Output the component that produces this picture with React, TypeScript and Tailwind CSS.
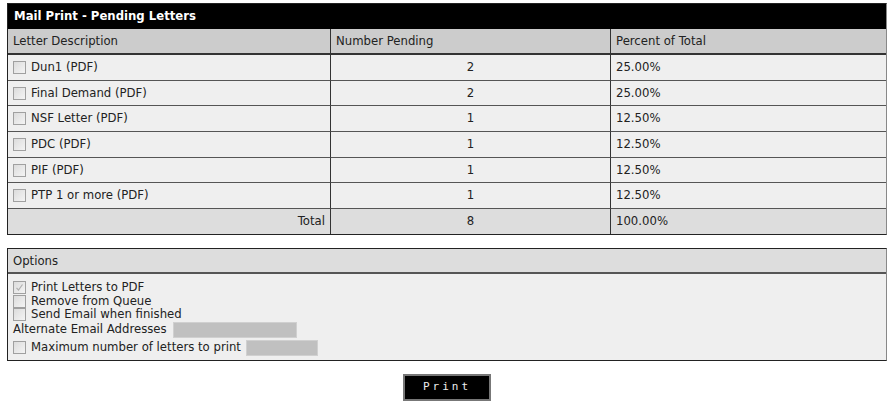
import React from "react";

const rows = [
  { d: "Dun1 (PDF)", n: 2, p: "25.00%", h: "h-[26px]" },
  { d: "Final Demand (PDF)", n: 2, p: "25.00%", h: "h-[25px]" },
  { d: "NSF Letter (PDF)", n: 1, p: "12.50%", h: "h-[26px]" },
  { d: "PDC (PDF)", n: 1, p: "12.50%", h: "h-[26px]" },
  { d: "PIF (PDF)", n: 1, p: "12.50%", h: "h-[25px]" },
  { d: "PTP 1 or more (PDF)", n: 1, p: "12.50%", h: "h-[26px]" },
];

function Box({ checked = false, disabled = false }: { checked?: boolean; disabled?: boolean }) {
  return (
    <span className="inline-flex items-center justify-center w-[13px] h-[13px] border border-[#a0a0a0] bg-gradient-to-br from-[#dcdcdc] to-[#f4f4f4] shrink-0">
      {checked && (
        <svg width="9" height="9" viewBox="0 0 9 9">
          <path d="M1.5 4.8 L3.5 7 L7.5 1.5" stroke={disabled ? "#b0b0b0" : "#333"} strokeWidth="1.2" fill="none" />
        </svg>
      )}
    </span>
  );
}

export default function App() {
  return (
    <div className="w-[894px] h-[402px] bg-white text-[11.7px] text-[#222] pt-[3px] px-[7px]" style={{ fontFamily: '"DejaVu Sans", Verdana, sans-serif' }}>
      <div className="border border-[#222] border-r-[#888]">
        <div className="bg-black text-white font-bold h-[25px] flex items-center px-[6px]">Mail Print - Pending Letters</div>
        <div className="grid grid-cols-[323px_280px_1fr]">
          <div className="bg-[#cccccc] h-[26px] flex items-center px-[5px] pt-[1px] border-b-2 border-[#333] border-r border-r-[#333]">Letter Description</div>
          <div className="bg-[#cccccc] h-[26px] flex items-center px-[5px] pt-[1px] border-b-2 border-[#333] border-r border-r-[#333]">Number Pending</div>
          <div className="bg-[#cccccc] h-[26px] flex items-center px-[5px] pt-[1px] border-b-2 border-[#333]">Percent of Total</div>
          {rows.map((r) => (
            <React.Fragment key={r.d}>
              <div className={`bg-[#efefef] ${r.h} flex items-center gap-[5px] px-[5px] border-b border-[#555] border-r border-r-[#333]`}>
                <Box />
                <span className="pt-[1px]">{r.d}</span>
              </div>
              <div className={`bg-[#efefef] ${r.h} flex items-center justify-center pt-[1px] border-b border-[#555] border-r border-r-[#333]`}>{r.n}</div>
              <div className={`bg-[#efefef] ${r.h} flex items-center px-[5px] pt-[1px] border-b border-[#555]`}>{r.p}</div>
            </React.Fragment>
          ))}
          <div className="bg-[#dddddd] h-[25px] flex items-center justify-end px-[5px] pt-[1px] border-r border-r-[#333]">Total</div>
          <div className="bg-[#dddddd] h-[25px] flex items-center justify-center pt-[1px] border-r border-r-[#333]">8</div>
          <div className="bg-[#dddddd] h-[25px] flex items-center px-[5px] pt-[1px]">100.00%</div>
        </div>
      </div>

      <div className="mt-[13px] border border-[#222] border-r-[#888]">
        <div className="bg-[#dddddd] h-[25px] flex items-center px-[5px] pt-[2px] border-b-2 border-[#555]">Options</div>
        <div className="bg-[#efefef] px-[5px] pt-[7px] pb-[4px] leading-[13.5px]">
          <div className="flex items-center gap-[5px]"><Box checked disabled /><span>Print Letters to PDF</span></div>
          <div className="flex items-center gap-[5px]"><Box /><span>Remove from Queue</span></div>
          <div className="flex items-center gap-[5px]"><Box /><span>Send Email when finished</span></div>
          <div className="flex items-center gap-[6px]"><span>Alternate Email Addresses</span><span className="inline-block w-[124px] h-[16px] bg-[#c0c0c0] border border-[#d0d0d0]" /></div>
          <div className="flex items-center gap-[5px] mt-[2px]"><Box /><span>Maximum number of letters to print</span><span className="inline-block w-[72px] h-[16px] bg-[#c0c0c0] border border-[#d0d0d0]" /></div>
        </div>
      </div>

      <div className="flex justify-center mt-[13px]">
        <button className="bg-black text-[#eee] border-2 border-[#777] w-[88px] h-[27px] text-[11px] tracking-[3px]" style={{ fontFamily: '"DejaVu Sans Mono", monospace' }}>Print</button>
      </div>
    </div>
  );
}
